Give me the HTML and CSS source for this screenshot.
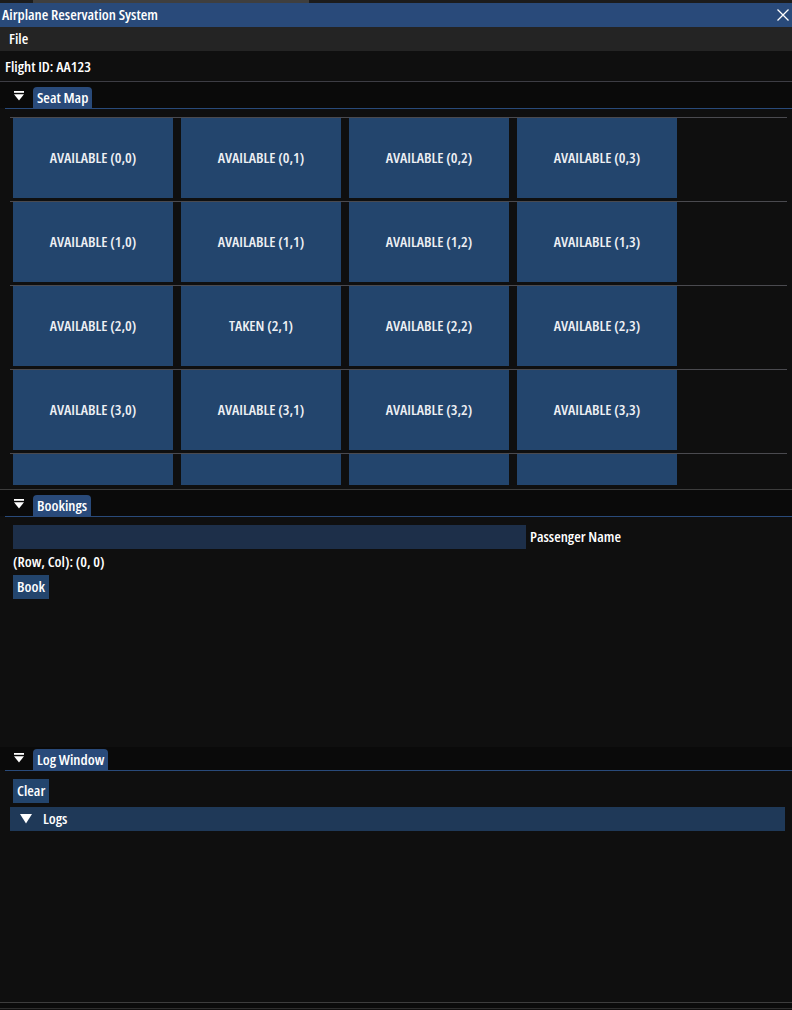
FILE: index.html
```html
<!DOCTYPE html>
<html>
<head>
<meta charset="utf-8">
<link rel="stylesheet" href="styles.css">
</head>
<body>
<div class="app">
  <div class="topstrip"><div class="topseg"></div></div>
  <div class="titlebar">
    <span class="title">Airplane Reservation System</span>
    <svg class="close" width="12" height="12" viewBox="0 0 12 12"><path d="M0.5 0.5 L11.5 11.5 M11.5 0.5 L0.5 11.5" stroke="#fff" stroke-width="1.3" fill="none"/></svg>
  </div>
  <div class="menubar"><span class="menuitem">File</span></div>
  <div class="flight">Flight ID: AA123</div>
  <div class="hsep"></div>

  <section class="pane pane-seat">
    <div class="tabbar">
      <svg class="winmenu" width="10" height="10" viewBox="0 0 10 10"><rect x="0" y="0" width="10" height="1.8" fill="#fff"/><path d="M0 3.2 L10 3.2 L5 9.5 Z" fill="#fff"/></svg>
      <div class="tab">Seat Map</div>
    </div>
    <div class="tabline"></div>
    <div class="pane-body seat-body">
      <div class="seat-table">
        <div class="seat-row"><div class="seat">AVAILABLE (0,0)</div><div class="seat">AVAILABLE (0,1)</div><div class="seat">AVAILABLE (0,2)</div><div class="seat">AVAILABLE (0,3)</div></div>
        <div class="seat-row"><div class="seat">AVAILABLE (1,0)</div><div class="seat">AVAILABLE (1,1)</div><div class="seat">AVAILABLE (1,2)</div><div class="seat">AVAILABLE (1,3)</div></div>
        <div class="seat-row"><div class="seat">AVAILABLE (2,0)</div><div class="seat">TAKEN (2,1)</div><div class="seat">AVAILABLE (2,2)</div><div class="seat">AVAILABLE (2,3)</div></div>
        <div class="seat-row"><div class="seat">AVAILABLE (3,0)</div><div class="seat">AVAILABLE (3,1)</div><div class="seat">AVAILABLE (3,2)</div><div class="seat">AVAILABLE (3,3)</div></div>
        <div class="seat-row"><div class="seat"></div><div class="seat"></div><div class="seat"></div><div class="seat"></div></div>
      </div>
    </div>
  </section>
  <div class="splitter"></div>

  <section class="pane pane-book">
    <div class="tabbar">
      <svg class="winmenu" width="10" height="10" viewBox="0 0 10 10"><rect x="0" y="0" width="10" height="1.8" fill="#fff"/><path d="M0 3.2 L10 3.2 L5 9.5 Z" fill="#fff"/></svg>
      <div class="tab">Bookings</div>
    </div>
    <div class="tabline"></div>
    <div class="pane-body book-body">
      <div class="field-row"><div class="input"></div><span class="label">Passenger Name</span></div>
      <div class="text-line">(Row, Col): (0, 0)</div>
      <div class="btn">Book</div>
    </div>
  </section>

  <section class="pane pane-log">
    <div class="tabbar tabbar-log">
      <svg class="winmenu" width="10" height="10" viewBox="0 0 10 10"><rect x="0" y="0" width="10" height="1.8" fill="#fff"/><path d="M0 3.2 L10 3.2 L5 9.5 Z" fill="#fff"/></svg>
      <div class="tab">Log Window</div>
    </div>
    <div class="tabline"></div>
    <div class="pane-body log-body">
      <div class="btn">Clear</div>
      <div class="header">
        <svg class="hdr-arrow" width="12" height="10" viewBox="0 0 12 10"><path d="M0 0 L12 0 L6 9.5 Z" fill="#fff"/></svg>
        <span>Logs</span>
      </div>
    </div>
  </section>
  <div class="bottom"><div class="bline"></div><div class="bgap"></div><div class="bline2"></div></div>
</div>
</body>
</html>
```

FILE: styles.css
```css
html, body {
  margin: 0;
  padding: 0;
  background: #0f0f0f;
}
body {
  width: 792px;
  height: 1010px;
  overflow: hidden;
  font-family: "Open Sans", "Roboto", sans-serif;
  font-stretch: condensed;
  font-weight: 600;
  font-size: 15px;
  line-height: 18px;
  color: #ffffff;
}
.app {
  display: flex;
  flex-direction: column;
  width: 792px;
  height: 1010px;
}
.topstrip {
  height: 3px;
  flex: none;
  background: #1c1c1c;
  display: flex;
}
.topseg {
  margin-left: 33px;
  width: 276px;
  background: #3f3f3f;
}
.titlebar {
  height: 24px;
  flex: none;
  box-sizing: border-box;
  background: #294a7a;
  display: flex;
  align-items: center;
  justify-content: space-between;
  padding: 0 3px 2px 2px;
}
.close {
  margin-top: 2px;
}
.menubar {
  height: 24px;
  flex: none;
  box-sizing: border-box;
  background: #242424;
  display: flex;
  align-items: center;
  padding: 0 0 2px 9px;
}
.flight {
  height: 30px;
  flex: none;
  display: flex;
  align-items: center;
  padding-left: 5px;
}
.hsep {
  height: 1px;
  flex: none;
  background: #3d3d44;
}
.pane {
  display: flex;
  flex-direction: column;
  overflow: hidden;
}
.pane-seat { height: 407px; flex: none; }
.pane-book { height: 257px; flex: none; }
.pane-log { flex: 1; }
.tabbar {
  height: 26px;
  flex: none;
  background: #0a0a0a;
  display: flex;
  align-items: flex-end;
}
.tabbar-log { height: 23px; }
.winmenu {
  margin: 0 9px 7px 14px;
}
.tab {
  height: 21px;
  box-sizing: border-box;
  padding: 0 4px 2px 4px;
  background: #294a7a;
  border-radius: 4px 4px 0 0;
  display: flex;
  align-items: center;
}
.tabline {
  height: 1px;
  flex: none;
  margin-left: 5px;
  background: #294a7a;
}
.pane-body {
  flex: 1;
  overflow: hidden;
}
.seat-body {
  padding: 8px 5px 0 10px;
}
.seat-table {
  display: flex;
  flex-direction: column;
  height: 368px;
  overflow: hidden;
}
.seat-row {
  flex: none;
  border-top: 1px solid #4a4a4f;
  padding: 0 3px 3px 3px;
  display: flex;
  gap: 8px;
}
.seat {
  width: 160px;
  height: 80px;
  box-sizing: border-box;
  padding-bottom: 3px;
  background: #23456d;
  display: flex;
  align-items: center;
  justify-content: center;
  color: #eef0f4;
}
.splitter {
  height: 1px;
  flex: none;
  background: #3d3d3d;
}
.book-body {
  padding: 8px 13px 0 13px;
  display: flex;
  flex-direction: column;
  align-items: flex-start;
}
.field-row {
  display: flex;
  align-items: center;
  gap: 4px;
}
.label {
  margin-top: -2px;
}
.input {
  width: 513px;
  height: 24px;
  background: #1d2f49;
}
.text-line {
  height: 26px;
  box-sizing: border-box;
  padding-bottom: 2px;
  display: flex;
  align-items: center;
}
.btn {
  height: 24px;
  box-sizing: border-box;
  padding: 0 4px 2px 4px;
  background: #23456d;
  display: flex;
  align-items: center;
}
.log-body {
  padding: 8px 7px 0 10px;
  display: flex;
  flex-direction: column;
  align-items: flex-start;
  gap: 4px;
}
.log-body .btn {
  margin-left: 3px;
}
.header {
  align-self: stretch;
  height: 24px;
  box-sizing: border-box;
  background: #1f3958;
  display: flex;
  align-items: center;
  padding-left: 10px;
  gap: 11px;
}
.header span {
  margin-bottom: 2px;
}
.bottom {
  height: 8px;
  flex: none;
  display: flex;
  flex-direction: column;
}
.bline { height: 1px; background: #3d3d3d; }
.bgap { height: 5px; background: #0b0b0b; }
.bline2 { height: 1px; background: #2e2e2e; }
```
